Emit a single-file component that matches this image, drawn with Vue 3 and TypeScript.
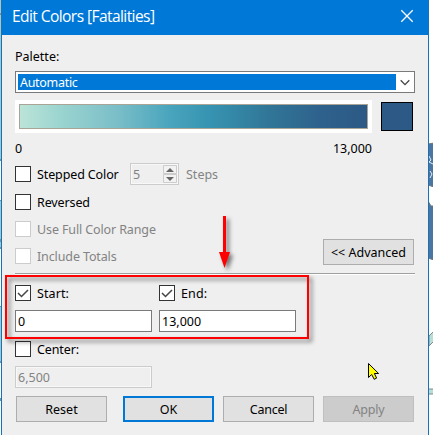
<script setup lang="ts">
import { ref } from 'vue'

const palette = ref('Automatic')
const stepped = ref(false)
const reversed = ref(false)
const start = ref({ on: true, value: '0' })
const end = ref({ on: true, value: '13,000' })
const center = ref({ on: false, value: '6,500' })
</script>

<template>
  <main class="desktop">
    <svg class="map" width="433" height="435" viewBox="0 0 433 435" aria-hidden="true">
      <path fill="#9fc9cd" d="M0 0h2v160H0zM0 200h2v48H0zM0 307h2v55H0z" />
      <path fill="#7c9298" d="M0 13h2v2H0zM0 159h2v2H0zM0 200h2v1H0zM0 239h2v3H0zM0 247h2v2H0zM0 306h2v1H0zM0 361h2v2H0zM0 398h2v3H0z" />
      <path fill="#4d759f" stroke="#777" d="M428 144l6-1v44l-6-2zM428 201l3 5h3v54l-6-2z" />
      <path stroke="#eee" d="M429 156l2 4-2 2 4 2M430 171l2 3-2 4" fill="none" />
      <path fill="#b8ddd4" stroke="#888" d="M429 336l5-5v10l-5 5zM428 389h6v5h-6z" />
    </svg>
    <section class="dialog">
      <header class="title">
        <span>Edit Colors [Fatalities]</span>
        <svg class="close" width="14" height="14" viewBox="0 0 14 14"><path d="M1.3 1.3l11.4 11.4M12.7 1.3L1.3 12.7" /></svg>
      </header>
      <div class="body">
        <div class="palette-label">Palette:</div>
        <div class="select">
          <div class="selected">{{ palette }}</div>
          <svg width="18" height="20" viewBox="0 0 18 20"><path d="M4.7 8.3L9 12.6l4.3-4.3" /></svg>
        </div>
        <div class="ramp-row">
          <div class="ramp-frame"><div class="ramp"></div></div>
          <div class="swatch"></div>
        </div>
        <div class="bounds"><span>0</span><span>13,000</span></div>
        <div class="row stepped">
          <span class="check" :class="{ on: stepped }"></span>
          <span class="label">Stepped Color</span>
          <div class="spin disabled">
            <span class="count">5</span>
            <svg width="14" height="18" viewBox="0 0 14 18">
              <path class="cell" d="M.5.5h13v8H.5zM.5 9.5h13v8H.5z" />
              <path class="tri" d="M3 7l4-4 4 4zM3 12h8l-4 4z" />
            </svg>
          </div>
          <span class="count disabled">Steps</span>
        </div>
        <div class="options">
          <div class="option-list">
            <div class="row"><span class="check" :class="{ on: reversed }"></span><span class="label">Reversed</span></div>
            <div class="row disabled"><span class="check"></span><span class="label">Use Full Color Range</span></div>
            <div class="row disabled"><span class="check"></span><span class="label">Include Totals</span></div>
          </div>
          <button class="btn">&lt;&lt; Advanced</button>
        </div>
        <div class="divider"></div>
        <div class="range">
          <div v-for="(f, i) in [start, end]" :key="i" class="field">
            <div class="row">
              <span class="check"><svg v-if="f.on" width="14" height="14" viewBox="0 0 14 14"><path d="M2 7l3.5 3.5L12 4" /></svg></span>
              <span class="label wide">{{ i ? 'End:' : 'Start:' }}</span>
            </div>
            <div class="input">{{ f.value }}</div>
          </div>
        </div>
        <div class="field center">
          <div class="row"><span class="check" :class="{ on: center.on }"></span><span class="label">Center:</span></div>
          <div class="input disabled">{{ center.value }}</div>
        </div>
        <footer class="actions">
          <button class="btn">Reset</button>
          <button class="btn primary">OK</button>
          <button class="btn cancel">Cancel</button>
          <button class="btn off" disabled>Apply</button>
        </footer>
      </div>
    </section>
    <div class="highlight"></div>
    <svg class="arrow" width="24" height="60" viewBox="0 0 24 60"><path d="M6 2h3v36h4L7.5 54 2 38h4z" /></svg>
    <svg class="cursor" width="15" height="21" viewBox="0 0 15 21"><path d="M1.5 1.5v14l3.2-3 2.5 4.8 2.4-1.2-2.2-4.6h4.2z" /></svg>
  </main>
</template>

<style>
body { margin: 0; overflow: hidden; }
</style>

<style scoped>
* { box-sizing: border-box; }
.desktop { position: relative; width: 433px; height: 435px; overflow: hidden; background: #fff; font: 12.5px/16px "Noto Sans", sans-serif; color: #000; white-space: nowrap; }
.map { position: absolute; left: 0; top: 0; }
svg { display: block; flex: none; }
.dialog { position: relative; width: 428px; height: 435px; margin-left: 1px; border: solid #1673b9; border-width: 0 1px; background: #efefef; }
.title { height: 35px; padding: 0 14px 3px 10px; display: flex; align-items: center; justify-content: space-between; background: #0078d7; color: #fff; font: 15.6px/20px "Open Sans", sans-serif; letter-spacing: -.6px; }
.close path { stroke: #fff; stroke-width: 1.3; fill: none; }
.body { padding: 14px 13px 0; }
.palette-label { height: 22px; }
.select { width: 400px; height: 22px; display: flex; border: 1px solid #7a7a7a; background: #fff; padding-left: 2px; }
.selected { width: 378px; height: 16px; margin-top: 2px; padding-left: 2px; background: #0078d7; color: #fff; line-height: 18px; letter-spacing: -.3px; }
.select path { fill: none; stroke: #444; stroke-width: 1.3; }
.ramp-row { display: flex; height: 33px; margin-top: 7px; align-items: center; gap: 9px; }
.ramp-frame { width: 357px; height: 33px; background: #fff; padding: 4px; }
.ramp { height: 25px; border: 1px solid #aaa496; background: linear-gradient(90deg, #bce4d8 0%, #9cd5d0 11%, #7bbec8 28%, #49a5bd 43%, #3693b1 55%, #317798 71%, #2e618c 87%, #2c5985 100%); }
.swatch { width: 32px; height: 29px; background: #2c5985; border: 1px solid #000; }
.bounds { width: 357px; height: 16px; margin-top: 8px; display: flex; justify-content: space-between; }
.row { display: flex; align-items: center; height: 16px; }
.check { width: 16px; height: 16px; flex: none; background: #fff; border: 1px solid #333; }
.check path { fill: none; stroke: #444; stroke-width: 1.5; }
.label { margin-left: 6px; padding-top: 2px; letter-spacing: -.12px; }
.label.wide { letter-spacing: .1px; }
.count { padding-top: 2px; }
.disabled { color: #838383; }
.disabled .check { border-color: #ccc; }
.stepped { height: 22px; margin-top: 6px; }
.stepped .label { width: 93px; }
.spin { width: 49px; height: 22px; border: 1px solid #ccc; display: flex; align-items: center; justify-content: space-between; padding: 0 1px 0 2px; margin-right: 7px; box-shadow: inset 0 0 0 1px #f8f8f8; }
.cell { fill: #f2f2f2; stroke: #ccc; }
.tri { fill: #666; }
.options { width: 399px; margin-top: 9px; display: flex; justify-content: space-between; align-items: flex-end; height: 71px; }
.option-list { align-self: flex-start; display: grid; gap: 11px; }
.btn { width: 91px; height: 26px; padding: 2px 0 0; flex: none; border: 1px solid #adadad; background: #e1e1e1; color: #000; font: inherit; }
.primary { border: 2px solid #0078d7; margin-left: 7px; }
.cancel { letter-spacing: -.25px; }
.off { color: #838383; border-color: #bfbfbf; background: #ccc; letter-spacing: -.2px; }
.divider { width: 400px; height: 2px; margin-top: 8px; border-top: 1px solid #a0a0a0; background: #fff; }
.range { display: flex; gap: 7px; margin-top: 10px; }
.field { width: 137px; }
.input { height: 22px; margin-top: 9px; border: 1px solid #7a7a7a; background: #fff; padding: 3px 2px 1px; }
.input.disabled { background: #efefef; border-color: #ccc; box-shadow: inset 0 0 0 1px #f8f8f8; }
.center { margin-top: 9px; }
.actions { display: flex; margin: 8px 0 0 1px; gap: 9px; }
.highlight { position: absolute; left: 5px; top: 275px; width: 304px; height: 64px; border: 2px solid #f00; filter: drop-shadow(3px 3px 2px #0008); }
.arrow { position: absolute; left: 217px; top: 214px; overflow: visible; filter: drop-shadow(3px 3px 2px #0008); }
.arrow path { fill: #f00; }
.cursor { position: absolute; left: 367px; top: 362px; }
.cursor path { fill: #ff0; stroke: #000; }
</style>
